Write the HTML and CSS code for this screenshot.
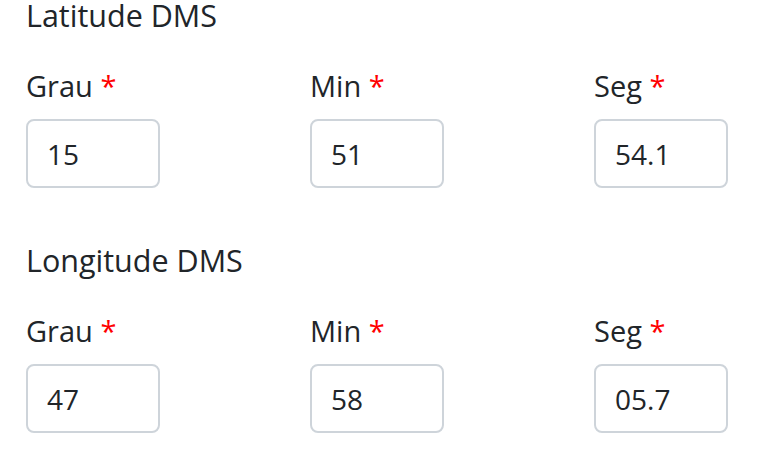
FILE: index.html
```html
<!DOCTYPE html>
<html lang="pt">
<head>
  <meta charset="UTF-8">
  <meta name="viewport" content="width=device-width, initial-scale=1.0">
  <title>Coordenadas DMS</title>
  <link rel="stylesheet" href="styles.css">
</head>
<body>
  <div class="group">
    <div class="group-title">Latitude DMS</div>
    <div class="row">
      <div class="field">
        <label>Grau <span class="req">*</span></label>
        <input class="form-control" type="text" value="15">
      </div>
      <div class="field">
        <label>Min <span class="req">*</span></label>
        <input class="form-control" type="text" value="51">
      </div>
      <div class="field">
        <label>Seg <span class="req">*</span></label>
        <input class="form-control" type="text" value="54.1">
      </div>
    </div>
  </div>

  <div class="group">
    <div class="group-title">Longitude DMS</div>
    <div class="row">
      <div class="field">
        <label>Grau <span class="req">*</span></label>
        <input class="form-control" type="text" value="47">
      </div>
      <div class="field">
        <label>Min <span class="req">*</span></label>
        <input class="form-control" type="text" value="58">
      </div>
      <div class="field">
        <label>Seg <span class="req">*</span></label>
        <input class="form-control" type="text" value="05.7">
      </div>
    </div>
  </div>
</body>
</html>
```

FILE: styles.css
```css
body {
  font-family: 'Open Sans', 'Noto Sans', sans-serif;
  font-size: 29px;
  line-height: 1.5;
  color: #212529;
  background: #fff;
  margin: 0;
  padding: 0 0 0 26px;
}
.group {
  margin-bottom: 57px;
}
.group-title {
  font-size: 30.5px;
  line-height: 1;
}
.row {
  display: flex;
}
.field {
  flex: 0 0 284px;
  display: flex;
  flex-direction: column;
  align-items: flex-start;
}
.field:last-child {
  flex: 0 0 auto;
}
.field label {
  margin-top: 33px;
  margin-bottom: 12px;
}
.req {
  color: #f00;
}
.form-control {
  box-sizing: border-box;
  width: 134px;
  height: 69px;
  padding: 0 19px;
  font-family: inherit;
  font-size: 28px;
  color: #212529;
  border: 2px solid #ced4da;
  border-radius: 8px;
  background: #fff;
}
```
